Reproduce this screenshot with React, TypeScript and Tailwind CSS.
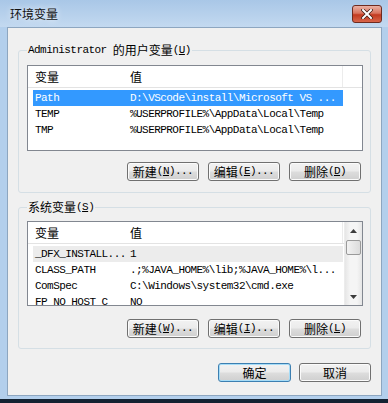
import React from 'react';

const latin = "font-['Liberation_Mono',monospace] text-[11px] tracking-[-0.55px]";
const cjk = "font-['Noto_Sans_CJK_SC','Noto_Sans',sans-serif] text-[12px]";

interface Row { name: string; value: string; selected?: boolean; hover?: boolean; }

const userVars: Row[] = [
  { name: 'Path', value: 'D:\\VScode\\install\\Microsoft VS ...', selected: true },
  { name: 'TEMP', value: '%USERPROFILE%\\AppData\\Local\\Temp' },
  { name: 'TMP', value: '%USERPROFILE%\\AppData\\Local\\Temp' },
];

const sysVars: Row[] = [
  { name: '_DFX_INSTALL...', value: '1', hover: true },
  { name: 'CLASS_PATH', value: '.;%JAVA_HOME%\\lib;%JAVA_HOME%\\l...' },
  { name: 'ComSpec', value: 'C:\\Windows\\system32\\cmd.exe' },
  { name: 'FP_NO_HOST_C', value: 'NO' },
];

function Label({ zh, k, dots }: { zh: string; k: string; dots?: boolean }) {
  return (
    <span className="flex items-center leading-none">
      <span className={cjk}>{zh}</span>
      <span className={latin}>(<span className="underline">{k}</span>){dots ? '...' : ''}</span>
    </span>
  );
}

function WinButton({ children, primary }: { children: React.ReactNode; primary?: boolean }) {
  return (
    <button
      className={`flex h-[19px] items-center justify-center rounded-[3px] border bg-[linear-gradient(#f2f2f2_0%,#ebebeb_48%,#dddddd_52%,#cfcfcf_100%)] text-black ${
        primary
          ? 'w-[73px] border-[#3c7fb1] shadow-[inset_0_0_0_1px_#a6dcf7]'
          : 'w-[72px] border-[#707070] shadow-[inset_0_0_0_1px_#fbfbfb]'
      }`}
    >
      {children}
    </button>
  );
}

function Scrollbar() {
  return (
    <div className="flex w-[18px] shrink-0 flex-col border-l border-[#ececec] bg-[linear-gradient(90deg,#e6e6e6,#f5f5f5_30%,#f5f5f5_70%,#e6e6e6)]">
      <div className="flex h-[17px] items-center justify-center">
        <svg width="7" height="4" viewBox="0 0 7 4"><path d="M0 4 L3.5 0 L7 4 Z" fill="#3c3c3c" /></svg>
      </div>
      <div className="mx-[1px] mt-[1px] h-[15px] rounded-[2px] border border-[#9a9a9a] bg-[linear-gradient(90deg,#f2f2f2,#dcdcdc)]" />
      <div className="flex-1" />
      <div className="flex h-[17px] items-center justify-center">
        <svg width="7" height="4" viewBox="0 0 7 4"><path d="M0 0 L3.5 4 L7 0 Z" fill="#3c3c3c" /></svg>
      </div>
    </div>
  );
}

function VarList({ rows, scroll, height }: { rows: Row[]; scroll?: boolean; height: string }) {
  return (
    <div className={`flex w-[336px] overflow-hidden border border-[#828790] bg-white ${height}`}>
      <div className="flex min-w-0 flex-1 flex-col">
        <div className={`flex h-[22px] shrink-0 items-center border-b border-[#e3e3e3] ${cjk}`}>
          <div className="w-[102px] pl-[7px]">变量</div>
          <div className="h-full w-[213px] border-r border-[#ececec] leading-[22px]">值</div>
        </div>
        <div className="mt-[2px] flex flex-col">
          {rows.map((r) => (
            <div
              key={r.name}
              className={`ml-[5px] flex h-[16px] w-[310px] shrink-0 items-center whitespace-nowrap ${latin} ${
                r.selected ? 'bg-[#3399ff] text-white' : r.hover ? 'bg-[#ececec] text-black' : 'text-black'
              }`}
            >
              <div className="w-[97px] pl-[2px]">{r.name}</div>
              <div>{r.value}</div>
            </div>
          ))}
        </div>
      </div>
      {scroll && <Scrollbar />}
    </div>
  );
}

export default function App() {
  return (
    <div className="flex h-[403px] w-[388px] flex-col overflow-hidden bg-[#b3cfec]">
      {/* title bar */}
      <div className="flex h-[27px] shrink-0 items-start justify-between bg-[linear-gradient(#a9c7e7,#c3d9f0)] pl-[10px] pr-[6px]">
        <span className={`${cjk} mt-[5px] text-[#111] [text-shadow:0_0_6px_#fff]`}>环境变量</span>
        <div className="mt-[5px] flex h-[18px] w-[30px] items-center justify-center rounded-[3px] border border-[#6e2a1f] bg-[linear-gradient(#eab1a4,#d9735e_45%,#c23a20_55%,#d8654a)]">
          <svg width="12" height="10" viewBox="0 0 12 10">
            <path d="M2 1 L10 9 M10 1 L2 9" stroke="#3b1a12" strokeWidth="3.4" strokeLinecap="square" />
            <path d="M2 1 L10 9 M10 1 L2 9" stroke="#fff" strokeWidth="2" strokeLinecap="square" />
          </svg>
        </div>
      </div>

      {/* client area */}
      <div className="ml-[7px] mr-[6px] flex h-[369px] shrink-0 flex-col border border-[#8da6c0] bg-[#f0f0f0] px-[10px] pt-[15px]">
        <fieldset className="w-[353px] rounded-[3px] border border-[#d5dfe5] pb-[11px] pl-[8px] pr-[7px]">
          <legend className="flex h-[14px] items-center px-[1px] text-black">
            <span className={latin}>Administrator&nbsp;</span>
            <Label zh="的用户变量" k="U" />
          </legend>
          <div className="mt-[8px]">
            <VarList rows={userVars} height="h-[86px]" />
          </div>
          <div className="mt-[11px] flex justify-end gap-[9px] pr-[2px]">
            <WinButton><Label zh="新建" k="N" dots /></WinButton>
            <WinButton><Label zh="编辑" k="E" dots /></WinButton>
            <WinButton><Label zh="删除" k="D" /></WinButton>
          </div>
        </fieldset>

        <fieldset className="mt-[7px] w-[353px] rounded-[3px] border border-[#d5dfe5] pb-[10px] pl-[8px] pr-[7px]">
          <legend className="flex h-[14px] items-center px-[1px] text-black">
            <Label zh="系统变量" k="S" />
          </legend>
          <div className="mt-[7px]">
            <VarList rows={sysVars} scroll height="h-[85px]" />
          </div>
          <div className="mt-[13px] flex justify-end gap-[9px] pr-[2px]">
            <WinButton><Label zh="新建" k="W" dots /></WinButton>
            <WinButton><Label zh="编辑" k="I" dots /></WinButton>
            <WinButton><Label zh="删除" k="L" /></WinButton>
          </div>
        </fieldset>

        <div className="mt-[14px] flex justify-end gap-[8px]">
          <WinButton primary><span className={cjk}>确定</span></WinButton>
          <WinButton primary={false}><span className={cjk}>取消</span></WinButton>
        </div>
      </div>

      <div className="h-[3px] shrink-0" />
      <div className="flex-1 bg-[#132232]" />
    </div>
  );
}
